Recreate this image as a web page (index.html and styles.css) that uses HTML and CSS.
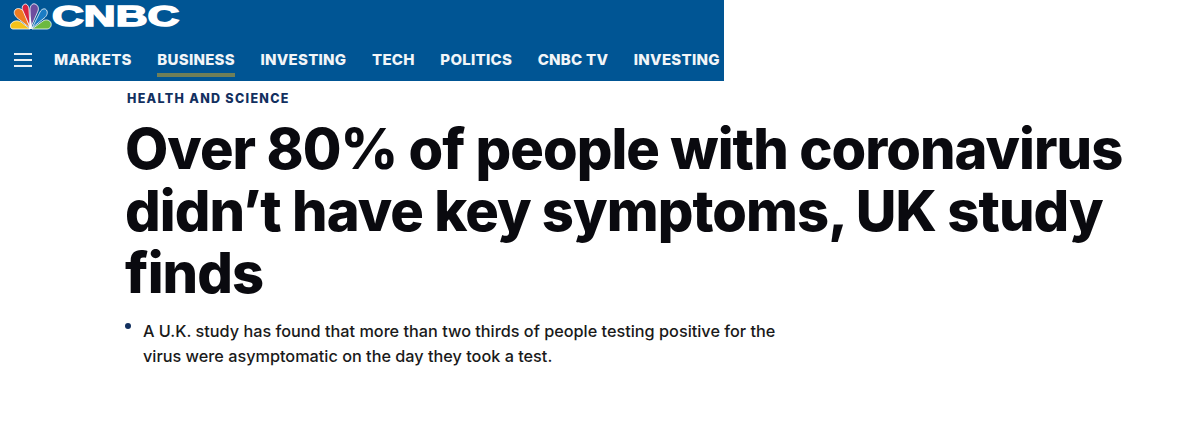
FILE: index.html
```html
<!DOCTYPE html>
<html lang="en">
  <head>
    <meta charset="UTF-8" />
    <title>Over 80% of people with coronavirus didn't have key symptoms - CNBC</title>
    <link rel="stylesheet" href="styles.css">
  </head>
  <body>
    <header class="site-header">
      <div class="logo-row">
        <svg class="peacock" width="42" height="28" viewBox="0 0 42 28">
          <g stroke="#fff" stroke-width="0.8">
            <path d="M20 27 L3 27 C0 27 -1 22 3 20 C6 18 9 19 11 20 Z" fill="#f5c21b"/>
            <path d="M20 26 L10 18 C5 15 3 11 5 8 C8 5 12 7 14 10 Z" fill="#ee7c22"/>
            <path d="M20 25 L13 9 C11 5 13 2 16 2 C18 3 19 5 19 8 Z" fill="#d9243f"/>
            <path d="M21 25 L20 8 C20 4 22 1 25 2 C28 3 29 6 28 9 Z" fill="#6e4d9e"/>
            <path d="M22 26 L30 10 C32 6 36 6 37 9 C38 12 36 15 33 17 Z" fill="#1b7cc4"/>
            <path d="M22 27 L33 19 C36 17 40 18 41 21 C42 25 39 27 37 27 Z" fill="#6cb93f"/>
          </g>
          <path d="M20.5 14 L22 27 L19 27 Z" fill="#fff"/>
        </svg>
        <span class="wordmark">CNBC</span>
      </div>
      <nav class="nav-row">
        <div class="hamburger"><span></span><span></span><span></span></div>
        <a class="nav-link">MARKETS</a>
        <a class="nav-link active">BUSINESS</a>
        <a class="nav-link">INVESTING</a>
        <a class="nav-link">TECH</a>
        <a class="nav-link">POLITICS</a>
        <a class="nav-link">CNBC TV</a>
        <a class="nav-link">INVESTING</a>
      </nav>
    </header>

    <main class="article">
      <a class="eyebrow">HEALTH AND SCIENCE</a>
      <h1>Over 80% of people with coronavirus didn’t have key symptoms, UK study finds</h1>
      <ul class="key-points">
        <li>A U.K. study has found that more than two thirds of people testing positive for the virus were asymptomatic on the day they took a test.</li>
      </ul>
    </main>
  </body>
</html>
```

FILE: styles.css
```css
body {
  margin: 0;
  background-color: #fff;
  font-family: Inter, "Open Sans", sans-serif;
}
.site-header {
  width: 724px;
  height: 81px;
  background-color: #005594;
  overflow: hidden;
}
.logo-row {
  display: flex;
  align-items: center;
  height: 32px;
  padding-left: 10px;
}
.wordmark {
  font-family: "Liberation Sans", sans-serif;
  font-size: 29px;
  font-weight: bold;
  line-height: 30px;
  color: #fff;
  -webkit-text-stroke: 1.5px #fff;
  display: inline-block;
  transform: scaleX(1.52);
  transform-origin: left center;
}
.nav-row {
  display: flex;
  align-items: flex-start;
  padding: 10px 0 0 14px;
  gap: 25.6px;
}
.hamburger {
  display: flex;
  flex-direction: column;
  gap: 4px;
  width: 18px;
  margin: 11px -3.6px 0 0;
}
.hamburger span {
  height: 2px;
  background-color: #e8eef4;
}
.nav-link {
  padding: 8px 0 3px;
  border-bottom: 4px solid transparent;
  color: #f2f5f8;
  font-size: 15px;
  font-weight: 800;
  line-height: 20px;
  letter-spacing: 0.26px;
  white-space: nowrap;
}
.nav-link.active {
  border-bottom-color: #6f7f58;
}
.article {
  width: 1010px;
  padding: 9px 0 0 125px;
}
.eyebrow {
  display: block;
  padding-left: 2px;
  color: #12305f;
  font-size: 12.5px;
  font-weight: 800;
  line-height: 18px;
  letter-spacing: 1.3px;
}
h1 {
  margin: 10px 0 0;
  color: #0a0a0f;
  font-size: 56px;
  font-weight: 800;
  line-height: 62px;
  letter-spacing: -0.95px;
}
.key-points {
  margin: 15px 0 0;
  padding: 0 0 0 18px;
  width: 650px;
  list-style: none;
}
.key-points li {
  position: relative;
  color: #1a1a1a;
  font-size: 16.25px;
  font-weight: 500;
  line-height: 25px;
}
.key-points li::before {
  content: "";
  position: absolute;
  left: -18px;
  top: 4px;
  width: 6px;
  height: 6px;
  border-radius: 50%;
  background-color: #12305f;
}
```
